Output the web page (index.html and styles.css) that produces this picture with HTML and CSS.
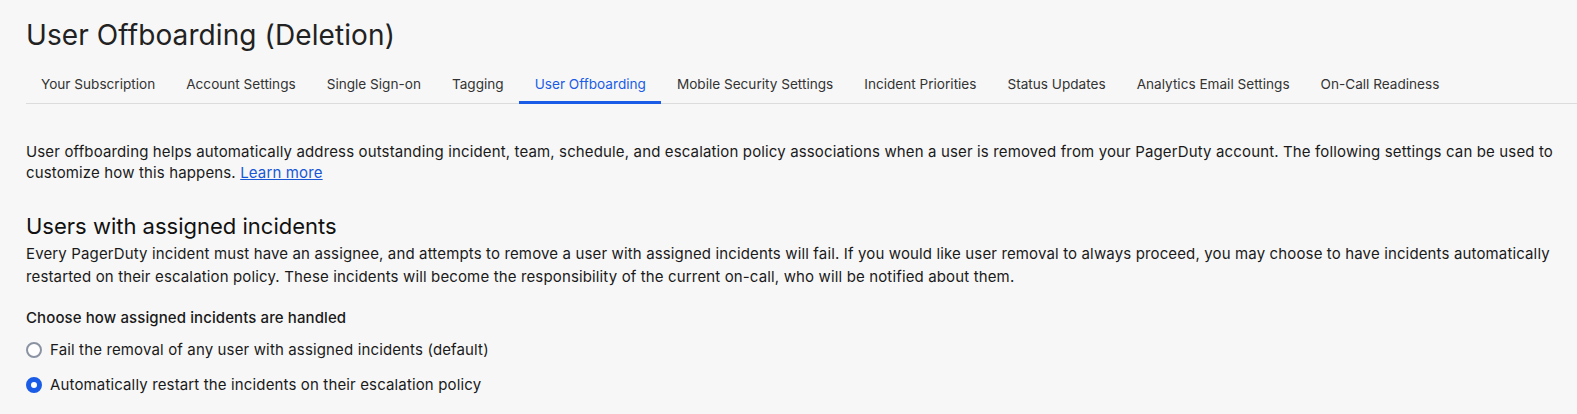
FILE: index.html
```
<!DOCTYPE html>
<html lang="en">
<head>
<meta charset="utf-8">
<title>User Offboarding (Deletion)</title>
<link rel="stylesheet" href="styles.css">
</head>
<body>
<main class="page">
  <h1 class="title">User Offboarding (Deletion)</h1>
  <nav class="tabs">
    <a class="tab">Your Subscription</a>
    <a class="tab">Account Settings</a>
    <a class="tab">Single Sign-on</a>
    <a class="tab">Tagging</a>
    <a class="tab active">User Offboarding</a>
    <a class="tab">Mobile Security Settings</a>
    <a class="tab">Incident Priorities</a>
    <a class="tab">Status Updates</a>
    <a class="tab">Analytics Email Settings</a>
    <a class="tab">On-Call Readiness</a>
  </nav>
  <p class="intro">User offboarding helps automatically address outstanding incident, team, schedule, and escalation policy associations when a user is removed from your PagerDuty account. The following settings can be used to customize how this happens. <a class="link" href="#">Learn more</a></p>
  <h2 class="section-title">Users with assigned incidents</h2>
  <p class="section-text">Every PagerDuty incident must have an assignee, and attempts to remove a user with assigned incidents will fail. If you would like user removal to always proceed, you may choose to have incidents automatically restarted on their escalation policy. These incidents will become the responsibility of the current on-call, who will be notified about them.</p>
  <div class="field">
    <div class="field-label">Choose how assigned incidents are handled</div>
    <label class="radio"><span class="radio-dot"></span>Fail the removal of any user with assigned incidents (default)</label>
    <label class="radio"><span class="radio-dot checked"></span>Automatically restart the incidents on their escalation policy</label>
  </div>
</main>
</body>
</html>
```
FILE: styles.css
```
html, body {
  margin: 0;
  padding: 0;
  background: #f7f7f7;
}
body {
  font-family: Inter, "Liberation Sans", Arial, sans-serif;
  color: #1a1a1a;
}
.page {
  padding: 17px 0 0 26px;
}
.title {
  font-family: Inter, sans-serif;
  font-weight: 400;
  font-size: 28px;
  line-height: 36px;
  margin: 0 0 22px 0;
  color: #222;
  letter-spacing: 0.1px;
}
.tabs {
  display: flex;
  border-bottom: 1px solid #dcdcdc;
  font-family: Inter, sans-serif;
  font-size: 13.6px;
}
.tab {
  padding: 0 15.5px 8px 15.5px;
  color: #333;
  border-bottom: 3px solid transparent;
  margin-bottom: -1px;
  line-height: 18px;
}
.tab:first-child {
  padding-left: 15px;
}
.tab.active {
  color: #1a5ce6;
  border-bottom-color: #1a5ce6;
}
.intro {
  font-size: 15px;
  line-height: 21px;
  letter-spacing: 0.14px;
  margin: 37px 12px 0 0;
}
.link {
  color: #1757d6;
  text-decoration: underline;
}
.section-title {
  font-weight: 400;
  font-size: 22px;
  line-height: 28px;
  margin: 29px 0 0 0;
  color: #111;
}
.section-text {
  font-size: 15px;
  line-height: 23px;
  letter-spacing: 0.14px;
  margin: 2px 12px 0 0;
}
.field {
  margin-top: 20px;
  display: flex;
  flex-direction: column;
}
.field-label {
  font-size: 15px;
  font-weight: 500;
  line-height: 20px;
  letter-spacing: 0.1px;
  margin-bottom: 12px;
}
.radio {
  display: flex;
  align-items: center;
  gap: 8px;
  font-size: 15px;
  line-height: 20px;
  letter-spacing: 0.14px;
  margin-bottom: 15px;
}
.radio-dot {
  width: 12px;
  height: 12px;
  border: 2px solid #8b93a3;
  border-radius: 50%;
  box-sizing: content-box;
  background: #fff;
}
.radio-dot.checked {
  border: 5px solid #1a5ce6;
  width: 6px;
  height: 6px;
}
```
